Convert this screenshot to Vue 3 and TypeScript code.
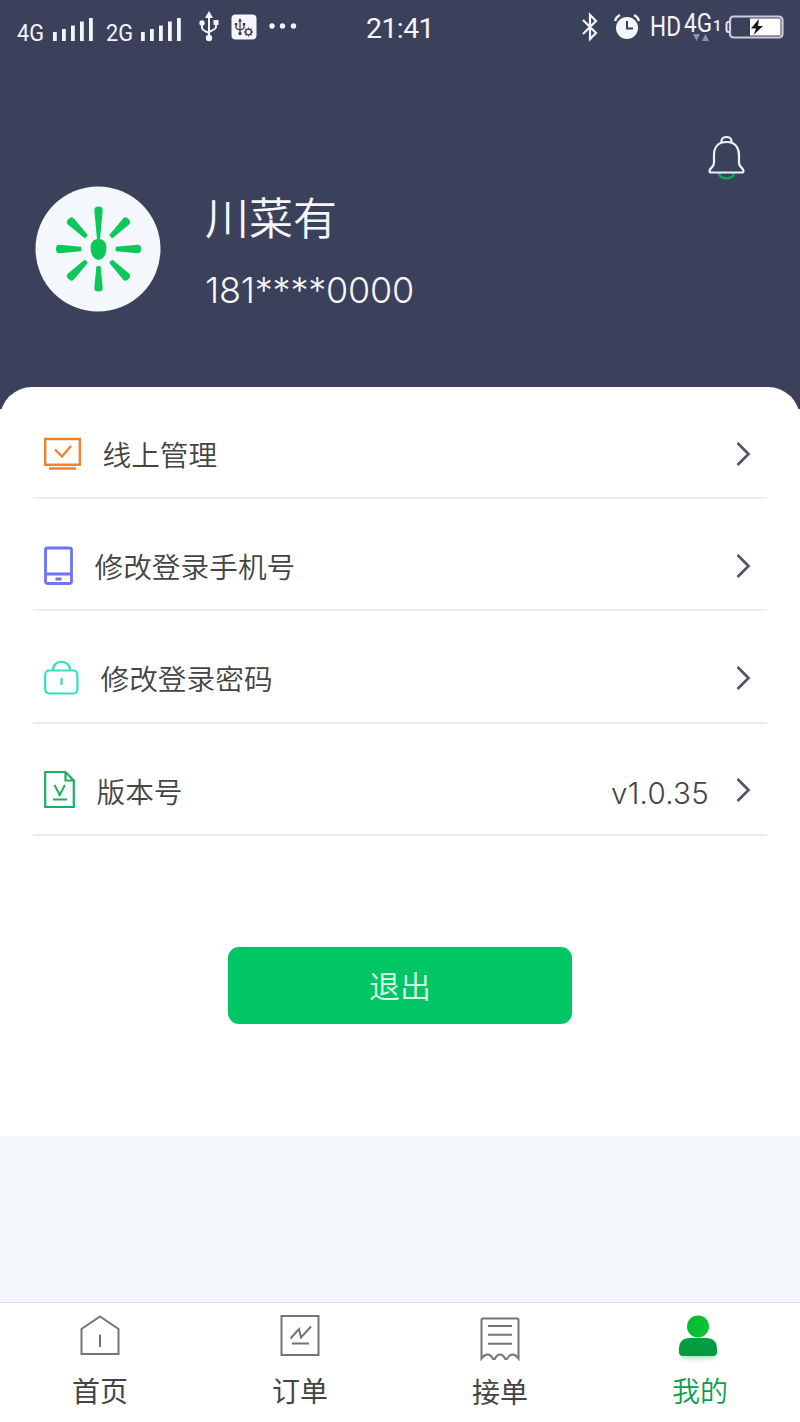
<script setup lang="ts">
interface MenuItem {
  id: 'online' | 'phone' | 'password' | 'version'
  label: string
  value?: string
}
interface TabItem {
  id: 'home' | 'order' | 'receive' | 'mine'
  label: string
}

const menu: MenuItem[] = [
  { id: 'online', label: '线上管理' },
  { id: 'phone', label: '修改登录手机号' },
  { id: 'password', label: '修改登录密码' },
  { id: 'version', label: '版本号', value: 'v1.0.35' },
]
const tabs: TabItem[] = [
  { id: 'home', label: '首页' },
  { id: 'order', label: '订单' },
  { id: 'receive', label: '接单' },
  { id: 'mine', label: '我的' },
]
const activeTab = 'mine'
const networks = ['4G', '2G']
const rays = [45, 90, 135, 180, 225, 270, 315]
</script>

<template>
  <div class="page">
    <header class="top">
      <div class="status">
        <div class="status-left">
          <div v-for="n in networks" :key="n" class="network">
            <svg class="net-name" width="28" height="24" viewBox="0 0 28 24">
              <text x="0" y="20" textLength="27" lengthAdjust="spacingAndGlyphs">{{ n }}</text>
            </svg>
            <svg width="40" height="24" viewBox="0 0 40 24" fill="#f3f5fb">
              <path d="M0 14h3.8v9H0zM9 11h3.8v12H9zM18 7.500h3.800V23H18zM27 3.500h3.800V23H27zM36 0h3.800v23H36z" />
            </svg>
          </div>
          <svg class="usb" width="20" height="32" viewBox="0 0 20 32">
            <g fill="none" stroke="#f3f5fb" stroke-width="2">
              <path d="M10 5v22M3 12v5q0 2 7 5M17 12v4q0 2-7 5" />
            </g>
            <path d="M10 0l4 7H6zM14.500 9h5v5h-5z" fill="#f3f5fb" />
            <circle cx="3" cy="12" r="2.700" fill="#f3f5fb" />
            <circle cx="10" cy="27" r="3.200" fill="#f3f5fb" />
          </svg>
          <svg class="usb-box" width="26" height="26" viewBox="0 0 26 26">
            <rect x="0.500" y="0.500" width="25" height="25" rx="4" fill="#f6f7fc" />
            <g fill="none" stroke="#3c415b" stroke-width="1.300">
              <path d="M9 6v13M5 10v3q0 2 4 3M13 10v3q0 2-4 3" />
              <circle cx="17.500" cy="18" r="2.800" />
              <path d="M17.500 13.500v2M17.500 20.500v2M13 18h2M20 18h2M14.300 14.800l1.300 1.300M19.400 19.900l1.300 1.300M14.300 21.200l1.300-1.300M19.400 16.100l1.300-1.300" />
            </g>
            <path d="M9 4l2 3.500H7zM3.800 9h2.500v2.500H3.800zM11.800 9h2.500v2.500h-2.500z" fill="#3c415b" />
            <circle cx="9" cy="19.500" r="1.700" fill="#3c415b" />
          </svg>
          <svg class="more" width="28" height="6" viewBox="0 0 28 6" fill="#f3f5fb">
            <circle cx="3" cy="3" r="2.700" /><circle cx="13.500" cy="3" r="2.700" /><circle cx="24.500" cy="3" r="2.700" />
          </svg>
        </div>
        <span class="clock">21:41</span>
        <div class="status-right">
          <svg width="18" height="30" viewBox="0 0 18 30" fill="none" stroke="#f3f5fb" stroke-width="2.200">
            <path d="M2 8l13 13-6 6V3l6 6L2 22" />
          </svg>
          <svg class="alarm" width="26" height="26" viewBox="0 0 26 26">
            <circle cx="13" cy="14" r="11" fill="#f3f5fb" />
            <path d="M1 7Q2 3 6 1M20 1q4 2 5 6" fill="none" stroke="#f3f5fb" stroke-width="2.200" />
            <path d="M13 7v7.500h6" fill="none" stroke="#3c415b" stroke-width="2" />
          </svg>
          <svg class="hd" width="31" height="26" viewBox="0 0 31 26">
            <text x="0" y="22" textLength="31" lengthAdjust="spacingAndGlyphs">HD</text>
          </svg>
          <svg class="data" width="37" height="30" viewBox="0 0 37 30">
            <text x="0" y="20" class="data-type" textLength="28" lengthAdjust="spacingAndGlyphs">4G</text>
            <text x="29" y="19" class="data-sim">1</text>
            <path d="M9 22h7l-3.500 7zM18 29h7l-3.500-7z" fill="#8e92a6" />
          </svg>
          <svg class="battery" width="59" height="24" viewBox="0 0 59 24">
            <path d="M5 7H3.500Q1.500 7 1.500 9v6q0 2 2 2H5" fill="none" stroke="#e4e6ef" stroke-width="2" />
            <rect x="5" y="1.500" width="52.500" height="21" rx="3.500" fill="none" stroke="#c9ccda" stroke-width="2.200" />
            <path d="M25 3.500h30.500v17H25z" fill="#fff" />
            <path d="M34 4l-8 9.500h5L28.500 20 38 11h-5z" fill="#15161c" />
          </svg>
        </div>
      </div>

      <div class="notice">
        <svg width="40" height="46" viewBox="0 0 40 46" fill="none">
          <path d="M13 38a7 5 0 0 0 15 0" stroke="#12a05a" stroke-width="2.800" />
          <path d="M15.500 7V6a5 4 0 0 1 10 0v1" stroke="#eef0f8" stroke-width="2.200" />
          <path d="M20.500 7C11 7 8 13.500 8 20v8c0 4-4.500 5-4.500 8q0 1.500 2 1.500h30q2 0 2-1.500c0-3-4.500-4-4.500-8v-8c0-6.500-3-13-12.500-13z" stroke="#eef0f8" stroke-width="2.200" />
        </svg>
      </div>

      <div class="profile">
        <svg class="avatar" width="126" height="126" viewBox="0 0 126 126">
          <circle cx="63" cy="63" r="62.500" fill="#f4f7fb" />
          <g fill="#0bc858">
            <path
              v-for="r in rays"
              :key="r"
              :transform="`rotate(${r} 63.500 63)`"
              d="M61.300 45.500L59.300 24q-.2-3.500 4.200-3.500t4.200 3.500L65.700 45.500q-2.200 1-4.400 0z"
            />
            <path d="M59.300 24q0-3.500 4.200-3.500t4.200 3.500L65 53q6.500 1.500 6.500 8.500 0 11-8 12.500-8-1.500-8-12.500 0-7 6.500-8.500z" />
          </g>
        </svg>
        <div class="identity">
          <div class="name">川菜有</div>
          <div class="mobile">181****0000</div>
        </div>
      </div>
    </header>

    <main class="sheet">
      <ul class="menu">
        <li v-for="item in menu" :key="item.id" class="row">
          <svg v-if="item.id === 'online'" width="37" height="40" viewBox="0 0 37 40" fill="none" stroke="#f5802a" stroke-width="2.400">
            <path d="M1.200 5h34.600v25.800H1.200zM5 34.500h27" /><path d="M11 15.500l7 7L27 12" />
          </svg>
          <svg v-else-if="item.id === 'phone'" width="29" height="40" viewBox="0 0 29 40" fill="none" stroke="#6c75f2" stroke-width="2.800">
            <rect x="1.500" y="2" width="26" height="35.500" rx="2" /><path d="M2 28h25M11.500 33h6" />
          </svg>
          <svg v-else-if="item.id === 'password'" width="35" height="40" viewBox="0 0 35 40" fill="none" stroke="#32dfc3" stroke-width="2.200">
            <rect x="1.200" y="12.500" width="32.200" height="23" rx="4" /><path d="M9 12c0-11 17-11 17 0M17.500 20v7" />
          </svg>
          <svg v-else width="31" height="40" viewBox="0 0 31 40" fill="none" stroke="#20ad62" stroke-width="2.200">
            <path d="M1.200 2h20.300l8.300 8.500V37H1.200zM21.500 2.500v8h8" /><path d="M10.500 15l5.200 10 5.200-10M9 29.500h14" stroke-width="2" />
          </svg>
          <span class="label">{{ item.label }}</span>
          <span v-if="item.value" class="value">{{ item.value }}</span>
          <svg class="chevron" width="16" height="26" viewBox="0 0 16 26" fill="none" stroke="#50556f" stroke-width="2.700">
            <path d="M2.500 2l11 11-11 11" />
          </svg>
        </li>
      </ul>
      <button class="logout" type="button">退出</button>
    </main>

    <nav class="tabs">
      <div v-for="tab in tabs" :key="tab.id" class="tab" :class="[tab.id, { active: tab.id === activeTab }]">
        <svg v-if="tab.id === 'home'" width="40" height="50" viewBox="0 0 40 50" fill="none" stroke="#747474" stroke-width="2">
          <path d="M20 5.500L38.500 18v25h-37V18zM20 23.500V36" />
        </svg>
        <svg v-else-if="tab.id === 'order'" width="40" height="50" viewBox="0 0 40 50" fill="none" stroke="#747474" stroke-width="2">
          <path d="M1.500 5h37v39h-37zM12 32.500h17" /><path d="M10.500 27.500l8.500-9.500 2 8.500L31 15.500" />
        </svg>
        <svg v-else-if="tab.id === 'receive'" width="40" height="50" viewBox="0 0 40 50" fill="none" stroke="#747474" stroke-width="2">
          <path d="M1.500 47.500V9q0-1.500 1.500-1.500h34q1.500 0 1.500 1.500v38.500q-3-4-6-4t-5.700 4.500h-1.500q-2.500-4.500-5.300-4.500t-5.300 4.500h-1.500q-2.500-4.500-5.700-4.500-3 0-6 4z" /><path d="M8 15h24M8 23.800h24M8 32.700h24" />
        </svg>
        <svg v-else width="50" height="50" viewBox="0 0 50 50">
          <defs>
            <linearGradient id="head" x1="0" y1="0" x2="1" y2="1"><stop offset="0" stop-color="#05b62d" /><stop offset="1" stop-color="#0bc936" /></linearGradient>
            <linearGradient id="body" x1="0" y1="0" x2="0" y2="1"><stop offset="0" stop-color="#05a044" /><stop offset="1" stop-color="#0a963e" /></linearGradient>
            <filter id="glow" x="-20%" y="-30%" width="140%" height="180%"><feGaussianBlur stdDeviation="2.200" /></filter>
          </defs>
          <rect x="5" y="34" width="36" height="14" rx="5" fill="#7ddda0" opacity=".6" filter="url(#glow)" />
          <circle cx="23" cy="15.500" r="11" fill="url(#head)" />
          <path d="M4 38.500q0-11.500 11-11.500h16q11 0 11 11.500V41q0 4-4 4H8q-4 0-4-4z" fill="url(#body)" />
        </svg>
        <span>{{ tab.label }}</span>
      </div>
    </nav>
  </div>
</template>

<style>
body {
  margin: 0;
}
</style>

<style scoped>
.page {
  display: flex;
  flex-direction: column;
  width: 800px;
  height: 1422px;
  overflow: hidden;
  background: #f3f6fa;
  font-family: Inter, 'Noto Sans CJK SC', sans-serif;
  color: #444;
}
svg {
  display: block;
  flex: none;
  overflow: visible;
}
.top {
  height: 409px;
  flex: none;
  background: #3c415b;
  color: #f6f7fc;
}
.status {
  display: grid;
  grid-template-columns: 366px 1fr auto;
  height: 56px;
}
.status text {
  font-family: Roboto, sans-serif;
  font-size: 23px;
  fill: #f3f5fb;
}
.status-left {
  display: flex;
  padding-left: 17px;
}
.network {
  display: flex;
  gap: 7.5px;
  margin: 18px 13px 0 0;
}
.net-name {
  margin-top: 3px;
}
.usb {
  margin: 11px 0 0 5px;
}
.usb-box {
  margin: 14px 0 0 12px;
}
.more {
  margin: 23px 0 0 12px;
}
.clock {
  font-family: Roboto, sans-serif;
  font-size: 28.5px;
  line-height: 57px;
  letter-spacing: -0.6px;
}
.status-right {
  display: flex;
  padding-right: 16px;
}
.status-right > svg:first-child {
  margin-top: 12px;
}
.alarm {
  margin: 14px 0 0 15px;
}
.hd {
  margin: 14px 0 0 10px;
}
.status .hd text {
  font-size: 27px;
}
.data {
  margin: 12px 0 0 3px;
}
.status .data-type {
  font-size: 25px;
}
.status .data-sim {
  font-size: 15px;
  font-weight: 500;
}
.battery {
  margin: 15px 0 0 4px;
}
.notice {
  display: flex;
  justify-content: flex-end;
  height: 46px;
  padding: 79px 54px 0 0;
}
.profile {
  display: flex;
  align-items: flex-start;
  gap: 44px;
  margin-top: 5px;
  padding-left: 35px;
}
.name {
  margin-top: 1px;
  font-size: 44px;
  font-weight: 350;
  line-height: 64px;
}
.mobile {
  margin-top: 14px;
  font-size: 36px;
  font-weight: 300;
  line-height: 50px;
  letter-spacing: -0.2px;
}
.sheet {
  position: relative;
  height: 749px;
  flex: none;
  margin-top: -22px;
  border-radius: 32px 32px 0 0;
  background: #fff;
}
.menu {
  margin: 0;
  padding: 0 33px;
  list-style: none;
}
.row {
  display: flex;
  align-items: center;
  box-sizing: border-box;
  height: 112.2px;
  padding: 23px 16px 0 11px;
  border-bottom: 2px solid #ededed;
}
.label {
  margin: 5px 0 0 21.5px;
  font-size: 28.7px;
  font-weight: 350;
  line-height: 40px;
}
.value {
  margin: 5px 0 0 auto;
  font-size: 29.5px;
  font-weight: 300;
  letter-spacing: 0.3px;
}
.chevron {
  margin-left: auto;
}
.value + .chevron {
  margin-left: 26px;
}
.logout {
  display: block;
  width: 344px;
  height: 77px;
  margin: 111.5px auto 0;
  padding: 0 0 2px;
  border: 0;
  border-radius: 11px;
  background: #02c666;
  color: #d9fbe8;
  font: 350 31px/1 'Noto Sans CJK SC', sans-serif;
}
.tabs {
  display: grid;
  grid-template-columns: repeat(4, 1fr);
  box-sizing: border-box;
  height: 120px;
  margin-top: auto;
  border-top: 1px solid #dfe0e4;
  background: #fff;
}
.tab {
  display: flex;
  flex-direction: column;
  align-items: center;
  padding-top: 8px;
  font-size: 28px;
  line-height: 40px;
}
.tab span {
  margin-top: 11px;
}
.receive span {
  margin-top: 12px;
}
.active {
  color: #0aa04c;
}
.active span {
  font-weight: 350;
}
</style>
